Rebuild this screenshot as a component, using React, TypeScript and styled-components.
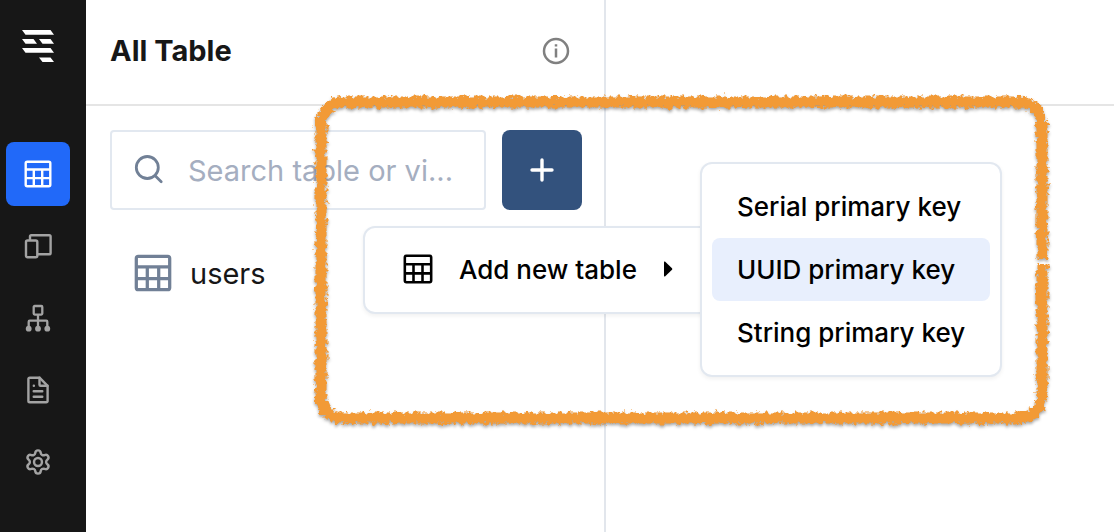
import React, { useId } from "react";
import styled, { createGlobalStyle } from "styled-components";

const GlobalStyle = createGlobalStyle`
  *, *::before, *::after { box-sizing: border-box; }
  body {
    margin: 0;
    background: #ffffff;
    color: #171717;
    font-family: Inter, "Liberation Sans", sans-serif;
  }
  button, input { font: inherit; color: inherit; }
`;

const Shell = styled.div`
  position: relative;
  display: flex;
  min-height: 100vh;
  overflow: hidden;
`;

const Sidebar = styled.nav`
  flex: none;
  display: flex;
  flex-direction: column;
  gap: 80px;
  width: 86px;
  padding: 30px 16px 0 6px;
  background: #171717;
`;

const LogoLink = styled.a`
  display: flex;
  justify-content: center;
`;

const NavList = styled.ul`
  display: flex;
  flex-direction: column;
  gap: 8px;
  margin: 0;
  padding: 0;
  list-style: none;
`;

const NavButton = styled.button<{ $active?: boolean }>`
  display: flex;
  align-items: center;
  justify-content: center;
  width: 64px;
  height: 64px;
  padding: 0;
  border: 0;
  border-radius: 8px;
  background: ${(p) => (p.$active ? "#2169f9" : "transparent")};
  color: ${(p) => (p.$active ? "#ffffff" : "#a3a3a3")};
`;

const Content = styled.div`
  flex: 1;
  display: grid;
  grid-template-columns: 520px 1fr;
  grid-template-rows: 106px 1fr;
`;

const PanelHeader = styled.header`
  display: flex;
  align-items: center;
  justify-content: space-between;
  padding: 0 34px 3px 24px;
  border-right: 2px solid #e2e6ec;
  border-bottom: 2px solid #e5e5e5;
`;

const EmptyHeader = styled.div`
  border-bottom: 2px solid #e5e5e5;
`;

const Title = styled.h1`
  margin: 0;
  font-size: 29px;
  line-height: 36px;
  font-weight: 700;
`;

const IconButton = styled.button`
  display: flex;
  padding: 0;
  border: 0;
  background: transparent;
  color: #808080;
`;

const TablePanel = styled.section`
  display: flex;
  flex-direction: column;
  gap: 32px;
  padding: 24px 22px 24px 24px;
  border-right: 2px solid #e2e6ec;
`;

const Toolbar = styled.div`
  position: relative;
  display: flex;
  gap: 16px;
`;

const SearchField = styled.label`
  flex: 1;
  display: flex;
  align-items: center;
  gap: 24px;
  min-width: 0;
  height: 80px;
  padding: 0 24px 0 22px;
  border: 2px solid #e2e8f0;
  border-radius: 4px;
  color: #718096;
`;

const SearchInput = styled.input`
  flex: 1;
  min-width: 0;
  height: 40px;
  padding: 0;
  border: 0;
  outline: 0;
  background: transparent;
  font-size: 29px;
  text-overflow: ellipsis;
  &::placeholder { color: #a5aec0; opacity: 1; }
`;

const AddButton = styled.button`
  display: flex;
  align-items: center;
  justify-content: center;
  width: 80px;
  height: 80px;
  padding: 0;
  border: 0;
  border-radius: 8px;
  background: #33527d;
  color: #ffffff;
`;

const TableList = styled.ul`
  margin: 0;
  padding: 0 24px;
  list-style: none;
`;

const TableLink = styled.a`
  display: flex;
  align-items: center;
  gap: 18px;
  height: 62px;
  color: #171717;
  font-size: 29px;
  text-decoration: none;
  svg { color: #718096; }
`;

const Menu = styled.div`
  position: absolute;
  z-index: 1;
  border: 2px solid #e2e8f0;
  border-radius: 12px;
  background: #ffffff;
  box-shadow: 0 2px 4px rgba(0, 0, 0, 0.06);
  color: #000000;
`;

const AddMenu = styled(Menu)`
  top: 96px;
  left: 253px;
  width: 350px;
  padding: 10px;
`;

const SubMenu = styled(Menu)`
  bottom: -65px;
  left: 335px;
  width: 302px;
  padding: 11px 10px;
`;

const MenuItem = styled.button<{ $active?: boolean }>`
  display: flex;
  align-items: center;
  width: 100%;
  height: 63px;
  padding: 0 25px;
  border: 0;
  border-radius: 8px;
  background: ${(p) => (p.$active ? "#e8effd" : "transparent")};
  font-size: 26px;
  font-weight: 500;
  text-align: left;
  white-space: nowrap;
`;

const ParentItem = styled(MenuItem)`
  gap: 26px;
  height: 64px;
  padding: 0 28px 2px;
`;

const Highlight = styled.svg`
  position: absolute;
  z-index: 2;
  top: 86px;
  left: 306px;
  pointer-events: none;
`;

const Workspace = styled.main``;

const Logo = () => (
  <svg width="32" height="32" viewBox="0 0 32 32" fill="currentColor" color="#ffffff" aria-hidden="true">
    <path d="M0 0h28.500l3.500 4.700H3.500zM0 9h11.500l3.500 4.700H3.500zM17 9h11.500l3.500 4.700H20.500zM0 18h28.500l3.500 4.700H3.500zM17 27.500h11.500l3.500 4.500H20.500z" />
  </svg>
);

const TableIcon = ({ size, stroke = 2.4 }: { size: number; stroke?: number }) => (
  <svg width={size} height={size} viewBox="0 0 28 28" fill="none" stroke="currentColor" strokeWidth={stroke} aria-hidden="true">
    <rect x="1.700" y="1.700" width="24.600" height="24.600" rx="1.500" />
    <path d="M1.500 9.500h25M1.500 18.100h25M9.800 9.500V26.500M18.200 9.500V26.500" />
  </svg>
);

const DevicesIcon = () => (
  <svg width="28" height="28" viewBox="0 0 28 28" fill="none" stroke="currentColor" strokeWidth="2.400" aria-hidden="true">
    <path d="M6 8V4.500A1.300 1.300 0 0 1 7.300 3.200H25.300A1.300 1.300 0 0 1 26.600 4.500v16.500a1.300 1.300 0 0 1-1.300 1.300H13" />
    <rect x="2" y="8.500" width="11.300" height="16.800" rx="1.500" />
  </svg>
);

const SchemaIcon = () => (
  <svg width="28" height="28" viewBox="0 0 28 28" fill="none" stroke="currentColor" strokeWidth="2.300" aria-hidden="true">
    <rect x="9.700" y="2" width="8.600" height="8.600" rx="1" />
    <path d="M14 10.700V24M4.700 24v-6.300a1 1 0 0 1 1-1h16.600a1 1 0 0 1 1 1V24" />
    <g fill="currentColor" stroke="none">
      <circle cx="4.700" cy="24.700" r="2.900" />
      <circle cx="14" cy="24.700" r="2.900" />
      <circle cx="23.300" cy="24.700" r="2.900" />
    </g>
  </svg>
);

const DocumentIcon = () => (
  <svg width="28" height="28" viewBox="0 0 28 28" fill="none" stroke="currentColor" strokeWidth="2.400" strokeLinecap="round" strokeLinejoin="round" aria-hidden="true">
    <path d="M15.500 1.700H5.700A1.300 1.300 0 0 0 4.400 3v22a1.300 1.300 0 0 0 1.300 1.300h16.600a1.300 1.300 0 0 0 1.300-1.300V9.800z" />
    <path d="M15.500 1.700V8.800a1 1 0 0 0 1 1H23.500M9.700 15.300h8.600M9.700 20.700h8.600M9.800 9.800h.1" />
  </svg>
);

const GearIcon = () => (
  <svg width="28" height="28" viewBox="0 0 24 24" fill="none" stroke="currentColor" strokeWidth="2.100" strokeLinecap="round" strokeLinejoin="round" aria-hidden="true">
    <path d="M9.671 4.136a2.340 2.340 0 0 1 4.659 0 2.340 2.340 0 0 0 3.319 1.915 2.340 2.340 0 0 1 2.330 4.033 2.340 2.340 0 0 0 0 3.831 2.340 2.340 0 0 1-2.330 4.033 2.340 2.340 0 0 0-3.319 1.915 2.340 2.340 0 0 1-4.659 0 2.340 2.340 0 0 0-3.320-1.915 2.340 2.340 0 0 1-2.330-4.033 2.340 2.340 0 0 0 0-3.831A2.340 2.340 0 0 1 6.350 6.051a2.340 2.340 0 0 0 3.319-1.915" />
    <circle cx="12" cy="12" r="3.400" />
  </svg>
);

const InfoIcon = () => (
  <svg width="28" height="28" viewBox="0 0 28 28" fill="none" stroke="currentColor" strokeWidth="2.500" aria-hidden="true">
    <circle cx="14" cy="14" r="12" />
    <path d="M14 11.500v9M14 7.200v2.300" />
  </svg>
);

const SearchIcon = () => (
  <svg width="30" height="30" viewBox="0 0 30 30" fill="none" stroke="currentColor" strokeWidth="2.800" strokeLinecap="round" aria-hidden="true">
    <circle cx="13.300" cy="12.500" r="11" />
    <path d="M21.200 20.700l6 6" />
  </svg>
);

const PlusIcon = () => (
  <svg width="24" height="24" viewBox="0 0 24 24" fill="none" stroke="currentColor" strokeWidth="3.400" strokeLinecap="round" aria-hidden="true">
    <path d="M12 2v20M2 12h20" />
  </svg>
);

const CaretIcon = () => (
  <svg width="10" height="16" viewBox="0 0 10 16" fill="currentColor" aria-hidden="true">
    <path d="M1 1.200Q1 0 2 .6L9 7.200Q9.700 8 9 8.800L2 15.400Q1 16 1 14.800z" />
  </svg>
);

const BrushFrame = () => {
  const id = useId();
  return (
    <Highlight width="750" height="348" viewBox="0 0 750 348" fill="none" aria-hidden="true">
      <defs>
        <filter id={id} filterUnits="userSpaceOnUse" x="0" y="0" width="750" height="348" colorInterpolationFilters="sRGB">
          <feTurbulence type="fractalNoise" baseFrequency="0.24" numOctaves="3" seed="4" result="noise" />
          <feDisplacementMap in="SourceGraphic" in2="noise" scale="9" xChannelSelector="R" yChannelSelector="G" result="rough" />
          <feDropShadow in="rough" dx="0" dy="2" stdDeviation="1.500" floodColor="#000000" floodOpacity="0.35" />
        </filter>
      </defs>
      <path
        filter={`url(#${id})`}
        stroke="#f29a36"
        strokeWidth="11"
        d="M736 173V42Q736 16 712 16H40Q15 16 15 42V308Q15 332 38 332H710Q736 332 736 306V177"
      />
    </Highlight>
  );
};

const NAV = [
  { label: "Tables", Icon: () => <TableIcon size={28} />, active: true },
  { label: "Views", Icon: DevicesIcon },
  { label: "Schema", Icon: SchemaIcon },
  { label: "Documents", Icon: DocumentIcon },
  { label: "Settings", Icon: GearIcon },
];

const KEY_TYPES = ["Serial primary key", "UUID primary key", "String primary key"];

export default function App() {
  return (
    <>
      <GlobalStyle />
      <Shell>
        <Sidebar>
          <LogoLink href="#" aria-label="Home"><Logo /></LogoLink>
          <NavList>
            {NAV.map(({ label, Icon, active }) => (
              <li key={label}>
                <NavButton type="button" aria-label={label} $active={active}><Icon /></NavButton>
              </li>
            ))}
          </NavList>
        </Sidebar>
        <Content>
          <PanelHeader>
            <Title>All Table</Title>
            <IconButton type="button" aria-label="Information"><InfoIcon /></IconButton>
          </PanelHeader>
          <EmptyHeader />
          <TablePanel>
            <Toolbar>
              <SearchField>
                <SearchIcon />
                <SearchInput type="text" aria-label="Search table or view" placeholder="Search table or vi..." />
              </SearchField>
              <AddButton type="button" aria-label="Add"><PlusIcon /></AddButton>
              <AddMenu>
                <ParentItem type="button">
                  <TableIcon size={30} />
                  Add new table
                  <CaretIcon />
                </ParentItem>
                <SubMenu>
                  {KEY_TYPES.map((name, i) => (
                    <MenuItem key={name} type="button" $active={i === 1}>{name}</MenuItem>
                  ))}
                </SubMenu>
              </AddMenu>
            </Toolbar>
            <TableList>
              <li>
                <TableLink href="#users"><TableIcon size={38} />users</TableLink>
              </li>
            </TableList>
          </TablePanel>
          <Workspace />
        </Content>
        <BrushFrame />
      </Shell>
    </>
  );
}
